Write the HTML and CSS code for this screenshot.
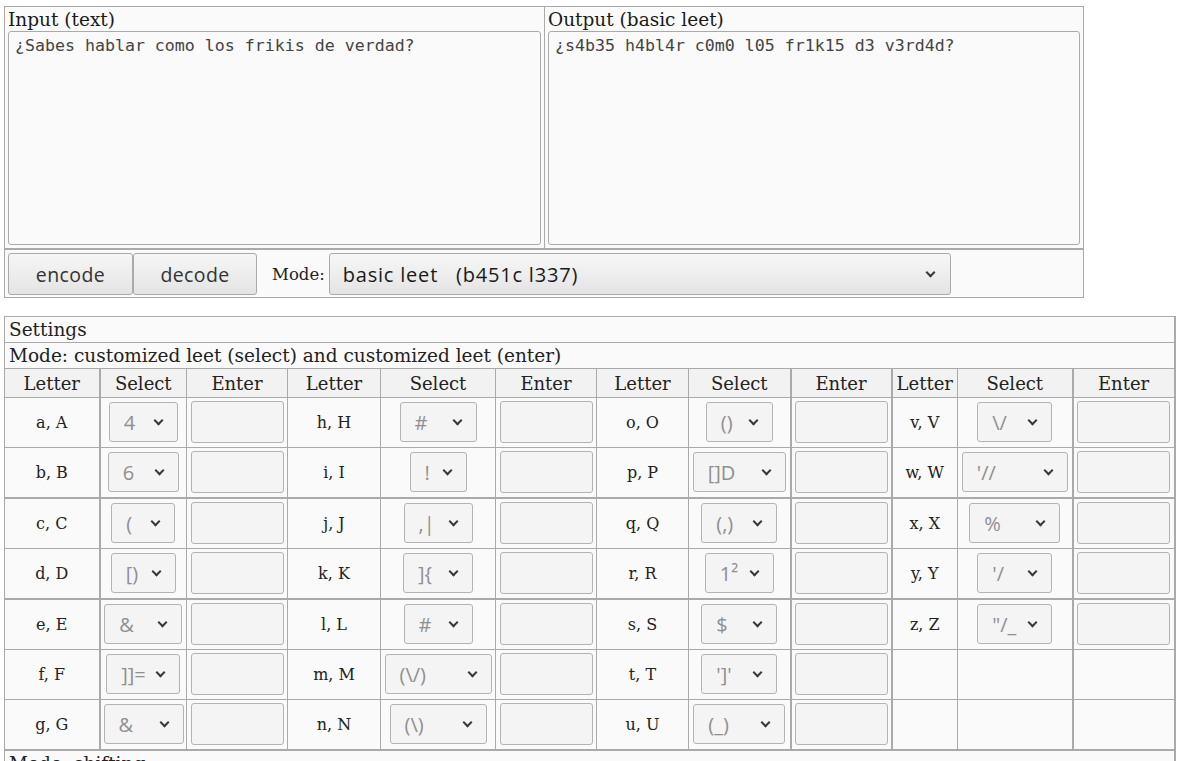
FILE: index.html
```html
<!DOCTYPE html>
<html>
<head>
<meta charset="utf-8">
<title>Leet</title>
<link rel="stylesheet" href="styles.css">
</head>
<body>
<table class="io">
  <colgroup><col class="io-c1"><col class="io-c2"></colgroup>
  <tr>
    <td class="io-cell"><div class="lbl">Input (text)</div><textarea class="ta">¿Sabes hablar como los frikis de verdad?</textarea></td>
    <td class="io-cell"><div class="lbl">Output (basic leet)</div><textarea class="ta">¿s4b35 h4bl4r c0m0 l05 fr1k15 d3 v3rd4d?</textarea></td>
  </tr>
  <tr>
    <td colspan="2" class="ctrl">
      <div class="ctrl-row">
        <button class="btn">encode</button><button class="btn">decode</button>
        <span class="mode-lbl">Mode:</span>
        <span class="sel sel-main"><select class="main-select"><option>basic leet&nbsp;&nbsp;&nbsp;(b451c l337)</option></select></span>
      </div>
    </td>
  </tr>
</table>

<table class="settings">
  <colgroup>
    <col class="c-l1"><col class="c-s1"><col class="c-e"><col class="c-l2"><col class="c-s2"><col class="c-e"><col class="c-l3"><col class="c-s3"><col class="c-e"><col class="c-l4"><col class="c-s4"><col class="c-e4">
  </colgroup>
  <tr><td colspan="12" class="title">Settings</td></tr>
  <tr><td colspan="12" class="title">Mode: customized leet (select) and customized leet (enter)</td></tr>
  <tr class="head">
    <th>Letter</th><th class="tl">Select</th><th>Enter</th>
    <th>Letter</th><th>Select</th><th>Enter</th>
    <th>Letter</th><th>Select</th><th class="tl">Enter</th>
    <th class="tl">Letter</th><th>Select</th><th class="tl">Enter</th>
  </tr>
  <tr>
    <td>a, A</td><td class="tl"><span class="sel" style="width:69px"><select><option>4</option></select></span></td><td><input class="ent"></td>
    <td>h, H</td><td><span class="sel" style="width:77px"><select><option>#</option></select></span></td><td><input class="ent"></td>
    <td>o, O</td><td><span class="sel" style="width:67px"><select><option>()</option></select></span></td><td class="tl"><input class="ent"></td>
    <td class="tl">v, V</td><td><span class="sel" style="width:75px"><select><option>\/</option></select></span></td><td class="tl"><input class="ent"></td>
  </tr>
  <tr>
    <td>b, B</td><td class="tl"><span class="sel" style="width:71px"><select><option>6</option></select></span></td><td><input class="ent"></td>
    <td>i, I</td><td><span class="sel" style="width:57px"><select><option>!</option></select></span></td><td><input class="ent"></td>
    <td>p, P</td><td><span class="sel" style="width:93px"><select><option>[]D</option></select></span></td><td class="tl"><input class="ent"></td>
    <td class="tl">w, W</td><td><span class="sel" style="width:106px"><select><option>'//</option></select></span></td><td class="tl"><input class="ent"></td>
  </tr>
  <tr class="tt">
    <td>c, C</td><td class="tl"><span class="sel" style="width:64px"><select><option>(</option></select></span></td><td><input class="ent"></td>
    <td>j, J</td><td><span class="sel" style="width:69px"><select><option>,|</option></select></span></td><td><input class="ent"></td>
    <td>q, Q</td><td><span class="sel" style="width:76px"><select><option>(,)</option></select></span></td><td class="tl"><input class="ent"></td>
    <td class="tl">x, X</td><td><span class="sel" style="width:91px"><select><option>%</option></select></span></td><td class="tl"><input class="ent"></td>
  </tr>
  <tr>
    <td>d, D</td><td class="tl"><span class="sel" style="width:65px"><select><option>[)</option></select></span></td><td><input class="ent"></td>
    <td>k, K</td><td><span class="sel" style="width:70px"><select><option>]{</option></select></span></td><td><input class="ent"></td>
    <td>r, R</td><td><span class="sel" style="width:69px"><select><option>1²</option></select></span></td><td class="tl"><input class="ent"></td>
    <td class="tl">y, Y</td><td><span class="sel" style="width:75px"><select><option>'/</option></select></span></td><td class="tl"><input class="ent"></td>
  </tr>
  <tr class="tt">
    <td>e, E</td><td class="tl"><span class="sel" style="width:78px"><select><option>&amp;</option></select></span></td><td><input class="ent"></td>
    <td>l, L</td><td><span class="sel" style="width:69px"><select><option>#</option></select></span></td><td><input class="ent"></td>
    <td>s, S</td><td><span class="sel" style="width:76px"><select><option>$</option></select></span></td><td class="tl"><input class="ent"></td>
    <td class="tl">z, Z</td><td><span class="sel" style="width:75px"><select><option>"/_</option></select></span></td><td class="tl"><input class="ent"></td>
  </tr>
  <tr>
    <td>f, F</td><td class="tl"><span class="sel" style="width:74px"><select><option>]]=</option></select></span></td><td><input class="ent"></td>
    <td>m, M</td><td><span class="sel" style="width:107px"><select><option>(\/)</option></select></span></td><td><input class="ent"></td>
    <td>t, T</td><td><span class="sel" style="width:76px"><select><option>']'</option></select></span></td><td class="tl"><input class="ent"></td>
    <td class="tl"></td><td></td><td class="tl"></td>
  </tr>
  <tr>
    <td>g, G</td><td class="tl"><span class="sel" style="width:80px"><select><option>&amp;</option></select></span></td><td><input class="ent"></td>
    <td>n, N</td><td><span class="sel" style="width:97px"><select><option>(\)</option></select></span></td><td><input class="ent"></td>
    <td>u, U</td><td><span class="sel" style="width:92px"><select><option>(_)</option></select></span></td><td class="tl"><input class="ent"></td>
    <td class="tl"></td><td></td><td class="tl"></td>
  </tr>
  <tr class="tt"><td colspan="12" class="title">Mode: shifting</td></tr>
</table>
</body>
</html>
```

FILE: styles.css
```css
html, body {
  margin: 0;
  background: #ffffff;
}
body {
  padding: 6px 4px;
  font-family: "DejaVu Serif", serif;
  font-size: 16px;
  color: #222;
}
table {
  border-collapse: collapse;
}

/* top input/output table */
.io {
  width: 1079px;
  table-layout: fixed;
  border: 1px solid #aaa;
}
.io-c1 { width: 540px; }
.io-c2 { width: 539px; }
.io td {
  border: 1px solid #aaa;
  background: #fafafa;
  vertical-align: top;
}
.io-cell {
  padding: 0 3px 3px 3px;
}
.lbl {
  height: 24px;
  line-height: 26px;
  font-size: 18.5px;
  color: #1a1a1a;
}
.ta {
  display: block;
  box-sizing: border-box;
  width: 100%;
  height: 214px;
  margin: 0;
  padding: 4px 6px;
  border: 1px solid #aaa;
  border-radius: 3px;
  background: #fafafa;
  font-family: "DejaVu Sans Mono", monospace;
  font-size: 16.6px;
  line-height: 20px;
  color: #444;
  resize: none;
}
.io .ctrl {
  border-top: 2px solid #aaa;
  padding: 3px 3px 2px 3px;
}
.ctrl-row {
  display: flex;
  align-items: center;
}
.btn {
  box-sizing: border-box;
  width: 125px;
  height: 42px;
  margin: 0;
  padding: 0;
  border: 1px solid #aaa;
  border-radius: 3px;
  background: linear-gradient(#f6f6f6, #e4e4e4);
  font-family: "Open Sans", sans-serif;
  font-size: 19.5px;
  letter-spacing: 0.4px;
  color: #333;
}
.btn + .btn {
  width: 124px;
}
.mode-lbl {
  margin-left: 15px;
  margin-right: 4px;
  font-size: 16.5px;
  color: #222;
}

/* select wrapper with chevron */
.sel {
  position: relative;
  display: inline-block;
  vertical-align: middle;
  height: 40px;
}
.sel select {
  box-sizing: border-box;
  width: 100%;
  height: 100%;
  margin: 0;
  padding: 0 0 0 14px;
  -webkit-appearance: none;
  appearance: none;
  border: 1px solid #b3b3b3;
  border-radius: 3px;
  background: #f4f4f4;
  font-family: "Open Sans", sans-serif;
  font-size: 20px;
  color: #8f8f8f;
  outline: none;
}
.sel::after {
  content: "";
  position: absolute;
  right: 16px;
  top: 50%;
  width: 5px;
  height: 5px;
  margin-top: -5px;
  border-right: 2px solid #383838;
  border-bottom: 2px solid #383838;
  transform: rotate(45deg);
  pointer-events: none;
}
.sel-main {
  width: 622px;
  height: 42px;
}
.sel-main select {
  background: linear-gradient(#f7f7f7, #e4e4e4);
  border-color: #aaa;
  color: #1a1a1a;
  padding-left: 13px;
  letter-spacing: 0.8px;
}
.sel-main::after {
  right: 17px;
}

/* settings table */
.settings {
  margin-top: 18px;
  width: 1171px;
  table-layout: fixed;
  border: 1px solid #aaa;
  border-right-width: 2px;
}
.c-l1 { width: 95px; }
.c-s1 { width: 87px; }
.c-e { width: 101px; }
.c-l2 { width: 93px; }
.c-s2 { width: 115px; }
.c-l3 { width: 92px; }
.c-s3 { width: 102px; }
.c-l4 { width: 66px; }
.c-s4 { width: 115px; }
.c-e4 { width: 102px; }

.settings td, .settings th {
  border: 1px solid #aaa;
  background: #fafafa;
  text-align: center;
  padding: 3px 3px 4px;
  height: 42px;
  font-size: 16px;
  font-weight: normal;
  color: #222;
}
.settings .title {
  text-align: left;
  height: 25px;
  padding: 0 4px;
  line-height: 25px;
  font-size: 18.5px;
}
.settings .head th {
  background: #f2f2f2;
  height: 28px;
  padding: 0;
  font-size: 18px;
}
.settings .tl {
  border-left: 2px solid #aaa;
}
.settings .tt td {
  border-top: 2px solid #aaa;
}
.ent {
  display: block;
  box-sizing: border-box;
  width: 93px;
  height: 42px;
  margin: 0 auto;
  border: 1px solid #b3b3b3;
  border-radius: 3px;
  background: #f4f4f4;
  padding: 0;
}
```
